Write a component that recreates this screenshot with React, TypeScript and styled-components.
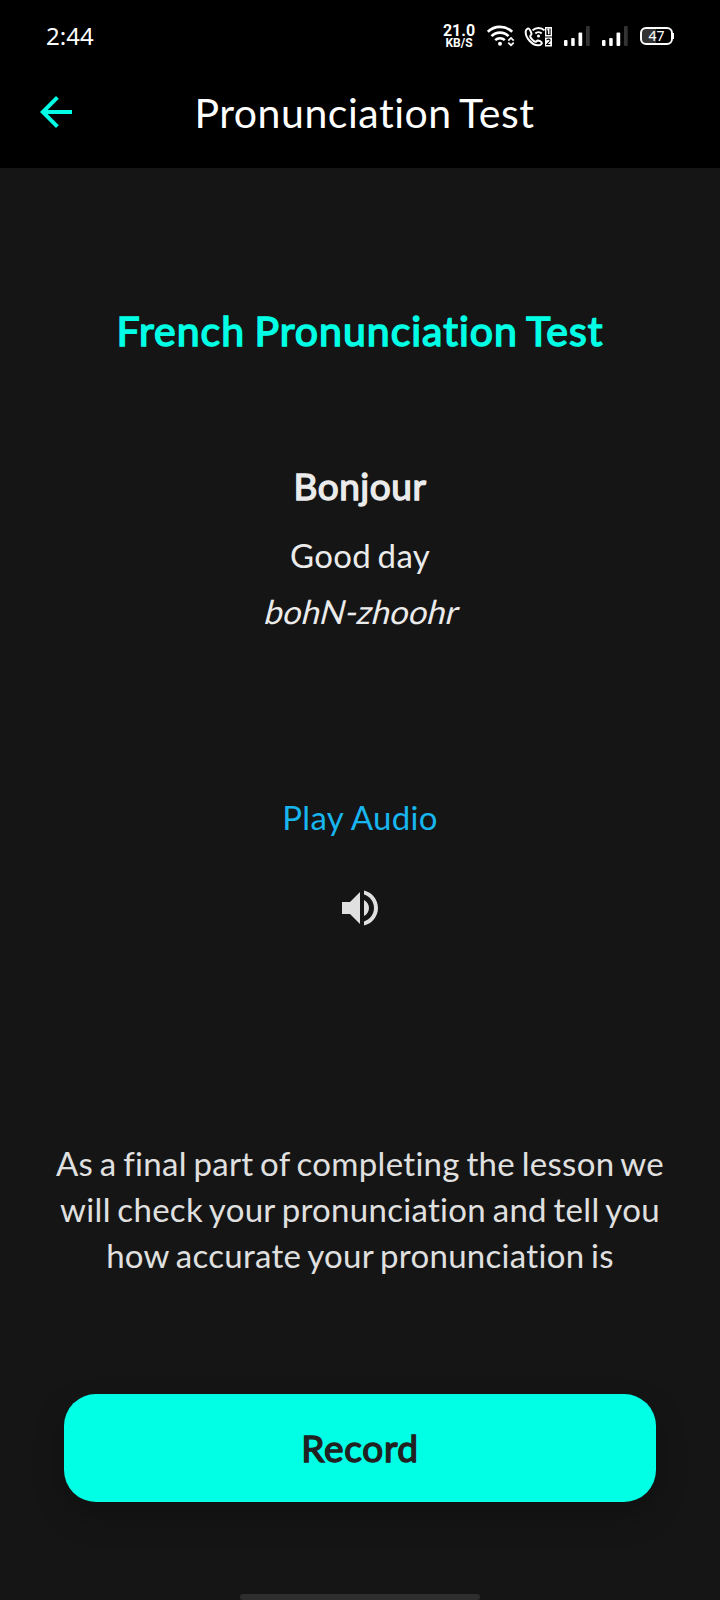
import React from "react";
import styled, { createGlobalStyle } from "styled-components";

const GlobalStyle = createGlobalStyle`
  * { box-sizing: border-box; }
  body {
    margin: 0;
    background: #151515;
    font-family: Lato, sans-serif;
    font-variant-ligatures: none;
  }
`;

const Screen = styled.div`
  width: 720px;
  height: 1600px;
  display: flex;
  flex-direction: column;
  background: #151515;
  overflow: hidden;
`;

const Header = styled.header`
  height: 168px;
  background: #000;
  color: #fff;
`;

const StatusBar = styled.div`
  height: 56px;
  padding: 15px 46px 0;
  display: flex;
  justify-content: space-between;
`;

const Clock = styled.time`
  margin-top: 1px;
  font: 400 24px/40px "Noto Sans", sans-serif;
`;

const StatusIcons = styled.div`
  display: flex;
  align-items: flex-start;
  padding-top: 9px;
`;

const NetSpeed = styled.div`
  display: flex;
  flex-direction: column;
  align-items: center;
  width: 36px;
  margin-right: 9px;
  font-family: Roboto, sans-serif;
  font-weight: 700;
`;

const SpeedValue = styled.span`
  font-size: 16px;
  line-height: 13px;
`;

const SpeedUnit = styled.span`
  font-size: 12px;
  line-height: 12px;
`;

const Glyph = styled.svg`
  display: block;
  flex: none;
`;

const Battery = styled.div`
  display: flex;
  align-items: center;
  margin: 3px 0 0 2px;
`;

const BatteryBody = styled.div`
  width: 33px;
  height: 18px;
  border: 2px solid #fff;
  border-radius: 6px;
  background: linear-gradient(90deg, #333 47%, #000 47%);
  font: 400 14px/14px "Noto Sans", sans-serif;
  text-align: center;
`;

const BatteryTip = styled.div`
  width: 1px;
  height: 6px;
  background: #fff;
`;

const AppBar = styled.div`
  height: 112px;
  padding: 0 32px;
  display: grid;
  grid-template-columns: 48px 1fr 39px;
  align-items: center;
`;

const BackButton = styled.button`
  padding: 0;
  border: 0;
  background: none;
  color: #00ffe5;
`;

const AppTitle = styled.h1`
  margin: 1px 0 0;
  font-size: 41px;
  line-height: 56px;
  font-weight: 400;
  letter-spacing: 0.54px;
  word-spacing: -2.5px;
  text-align: center;
`;

const Content = styled.main`
  flex: 1;
  display: flex;
  flex-direction: column;
  align-items: center;
  padding-top: 138px;
  color: #ebebeb;
`;

const Heading = styled.h2`
  margin: 0 0 103px;
  font-size: 41px;
  line-height: 50px;
  font-weight: 400;
  letter-spacing: 1px;
  word-spacing: -2px;
  -webkit-text-stroke: 1.5px currentColor;
  color: #00ffe5;
`;

const WordCard = styled.section`
  display: flex;
  flex-direction: column;
  align-items: center;
  height: 335px;
`;

const Word = styled.h3`
  margin: 0 0 19px;
  font-size: 37px;
  line-height: 54px;
  font-weight: 400;
  letter-spacing: 0.55px;
  -webkit-text-stroke: 1.4px currentColor;
`;

const Line = styled.p`
  margin: 0 0 10px;
  font-size: 33px;
  line-height: 46px;
  letter-spacing: 0.3px;
  word-spacing: -2.1px;
`;

const Phonetic = styled(Line)`
  letter-spacing: -0.05px;
  transform: skewX(-14deg);
  transform-origin: 50% 77%;
`;

const PlayLabel = styled(Line)`
  margin-bottom: 44px;
  word-spacing: -0.2px;
  color: #18b6ef;
`;

const PlayButton = styled.button`
  padding: 0;
  border: 0;
  background: none;
  color: #e0e0e0;
`;

const Note = styled(Line)`
  margin: 209px 0 0;
  width: 640px;
  line-height: 45.76px;
  text-align: center;
  color: #e0e0e0;
`;

const RecordButton = styled.button`
  margin-top: 116px;
  width: 592px;
  height: 108px;
  flex: none;
  border: 0;
  border-radius: 32px;
  background: #00ffe5;
  box-shadow: 0 14px 30px rgba(0, 0, 0, 0.25);
  color: #212121;
  font: 400 37px/46px Lato, sans-serif;
  letter-spacing: 0.7px;
  -webkit-text-stroke: 1.4px currentColor;
`;

const HomeHandle = styled.div`
  align-self: center;
  width: 240px;
  height: 6px;
  border-radius: 3px;
  background: #2e2e2e;
`;

const WifiIcon = () => (
  <Glyph width="38" height="24" viewBox="486 24 38 24" fill="none" stroke="#fff" strokeWidth="2.6">
    <path d="M487.800 31.800a17.500 17.500 0 0 1 24.400 0M491.500 36.200a12 12 0 0 1 17 0M495.200 40.200a6.800 6.800 0 0 1 9.600 0" />
    <circle cx="500" cy="43.800" r="2" fill="#fff" stroke="none" />
    <path d="M508.300 40.600l2.700-2.600 2.700 2.600M508.300 42.600l2.700 2.600 2.700-2.600" strokeWidth="1.700" />
  </Glyph>
);

const WifiCallIcon = () => (
  <Glyph width="38" height="24" viewBox="524 24 38 24" fill="none" stroke="#fff">
    <path
      d="M528.800 28.600c-1.300-.3-2.900.9-3.100 2.800-.5 6.300 6.500 14.100 12.600 13.900 2.200-.1 3.700-1.300 3.500-2.600-.1-.9-3.200-2.400-4.100-2.200-.9.200-1.400 1.500-2.300 1.300-1.800-.5-4.700-3.600-5.200-5.400-.2-.9 1.200-1.500 1.300-2.400.1-.9-1.700-5.100-2.700-5.400z"
      strokeWidth="2"
      strokeLinejoin="round"
    />
    <path d="M532.500 30.400a8.500 8.500 0 0 1 12 0M535.300 33.500a4.700 4.700 0 0 1 6.400 0" strokeWidth="2" />
    <circle cx="538.500" cy="36" r="1.500" fill="#fff" stroke="none" />
    <path d="M545.700 27.700h5.600v8h-5.600z" strokeWidth="1.400" />
    <path d="M547.400 30l1.300-.8v5" strokeWidth="1.500" />
    <path d="M545 37.500h7v9h-7z" fill="#fff" stroke="none" />
    <path d="M546.700 40.200c.2-1.500 3.400-1.500 3.400.3 0 1.300-2.600 2.500-3.300 4h3.600" stroke="#000" strokeWidth="1.100" />
  </Glyph>
);

const SignalIcon = () => (
  <Glyph width="38" height="24" viewBox="562 24 38 24" fill="#fff">
    <rect x="564" y="40" width="3.500" height="6" rx="1" />
    <rect x="571.200" y="38" width="3.500" height="8" rx="1" />
    <rect x="578.500" y="32.500" width="3.700" height="13.500" rx="1" />
    <rect x="586" y="26" width="3.700" height="20" rx="1" fill="#333" />
  </Glyph>
);

const BackArrow = () => (
  <Glyph width="48" height="48" viewBox="0 0 24 24" fill="currentColor">
    <path d="M20 11H7.830l5.590-5.590L12 4l-8 8 8 8 1.410-1.410L7.830 13H20v-2z" />
  </Glyph>
);

const SpeakerIcon = () => (
  <Glyph width="48" height="48" viewBox="0 0 24 24" fill="currentColor">
    <path d="M3 9v6h4l5 5V4L7 9H3zm13.500 3c0-1.770-1.020-3.290-2.500-4.030v8.050c1.480-.73 2.500-2.250 2.500-4.020zM14 3.230v2.060c2.890.86 5 3.540 5 6.710s-2.110 5.850-5 6.710v2.060c4.010-.91 7-4.490 7-8.770s-2.990-7.860-7-8.770z" />
  </Glyph>
);

export default function App() {
  return (
    <Screen>
      <GlobalStyle />
      <Header>
        <StatusBar>
          <Clock>2:44</Clock>
          <StatusIcons>
            <NetSpeed>
              <SpeedValue>21.0</SpeedValue>
              <SpeedUnit>KB/S</SpeedUnit>
            </NetSpeed>
            <WifiIcon />
            <WifiCallIcon />
            <SignalIcon />
            <SignalIcon />
            <Battery>
              <BatteryBody>47</BatteryBody>
              <BatteryTip />
            </Battery>
          </StatusIcons>
        </StatusBar>
        <AppBar>
          <BackButton aria-label="Back">
            <BackArrow />
          </BackButton>
          <AppTitle>Pronunciation Test</AppTitle>
        </AppBar>
      </Header>
      <Content>
        <Heading>French Pronunciation Test</Heading>
        <WordCard>
          <Word>Bonjour</Word>
          <Line>Good day</Line>
          <Phonetic>bohN-zhoohr</Phonetic>
        </WordCard>
        <PlayLabel>Play Audio</PlayLabel>
        <PlayButton aria-label="Play audio">
          <SpeakerIcon />
        </PlayButton>
        <Note>
          As a final part of completing the lesson we will check your pronunciation and tell you how
          accurate your pronunciation is
        </Note>
        <RecordButton>Record</RecordButton>
      </Content>
      <HomeHandle />
    </Screen>
  );
}
